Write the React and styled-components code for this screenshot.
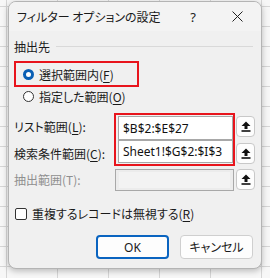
import React from "react";
import styled, { createGlobalStyle } from "styled-components";

const Global = createGlobalStyle`
  html, body { margin: 0; padding: 0; }
  body {
    width: 270px;
    height: 278px;
    overflow: hidden;
    background-color: #f7f7f7;
    background-image:
      repeating-linear-gradient(90deg, transparent 0 6px, #d6d6d6 6px 7px, transparent 7px 51px),
      repeating-linear-gradient(180deg, transparent 0 6px, #d6d6d6 6px 7px, transparent 7px 20px);
    font-family: "Noto Sans", "Noto Sans CJK JP", sans-serif;
  }
`;

const Dialog = styled.div`
  margin: 1px 0 0 8px;
  width: 254px;
  height: 268px;
  box-sizing: border-box;
  background: #f0f0f0;
  border: 1px solid #b4b4b4;
  border-radius: 8px;
  box-shadow: 0 2px 6px rgba(0, 0, 0, 0.25);
  display: flex;
  flex-direction: column;
  overflow: hidden;
  font-size: 12px;
  color: #1a1a1a;
  font-feature-settings: "palt" 1;
`;

const TitleBar = styled.div`
  height: 29px;
  display: flex;
  align-items: center;
  padding: 0 2px 0 8px;
  background: #f3f3f3;
`;

const Title = styled.span`
  flex: 1;
  font-size: 12px;
  font-family: "Noto Sans CJK JP", sans-serif;
`;

const TitleBtn = styled.span`
  width: 44px;
  display: flex;
  justify-content: center;
  font-size: 13px;
  color: #222;
`;

const Body = styled.div`
  padding: 7px 8px 0 5px;
  display: flex;
  flex-direction: column;
`;

const GroupHead = styled.div`
  display: flex;
  align-items: center;
  gap: 6px;
  height: 16px;
  font-family: "Noto Sans CJK JP", sans-serif;
  &::after {
    content: "";
    flex: 1;
    height: 1px;
    background: #d9d9d9;
  }
`;

const Mark = styled.div`
  border: 2px solid ${(p) => (p.$on ? "#e8141c" : "transparent")};
`;

const RadioBox = styled(Mark)`
  align-self: flex-start;
  width: 114px;
  margin-top: 7px;
  padding: 3px 0 3px 7px;
`;

const RadioRow = styled.label`
  display: flex;
  align-items: center;
  gap: 5px;
  height: 16px;
  padding-left: ${(p) => p.$pad || 0}px;
  margin-top: ${(p) => p.$top || 0}px;
  font-family: "Noto Sans CJK JP", sans-serif;
  white-space: nowrap;
`;

const Radio = styled.span`
  width: 11px;
  height: 11px;
  border-radius: 50%;
  box-sizing: border-box;
  border: ${(p) => (p.$checked ? "3.5px solid #0a5fb4" : "1px solid #333")};
  background: #fff;
`;

const U = styled.span`
  text-decoration: underline;
  text-underline-offset: 2px;
`;

const Fields = styled.div`
  margin-top: 9px;
  display: grid;
  grid-template-columns: 101px 119px 21px;
  grid-template-rows: 27px 26px 27px;
  align-items: center;
`;

const FieldLabel = styled.div`
  grid-column: 1;
  font-family: "Noto Sans CJK JP", sans-serif;
  color: ${(p) => (p.$disabled ? "#8f8f8f" : "#1a1a1a")};
  white-space: nowrap;
`;

const InputStack = styled(Mark)`
  grid-column: 2;
  grid-row: 1 / span 2;
  align-self: stretch;
  display: flex;
  flex-direction: column;
  justify-content: space-between;
  padding: 0 0 0 2px;
  margin: 0 -1px 0 -1px;
`;

const Field = styled.div`
  grid-column: 2;
  height: 22px;
  box-sizing: border-box;
  border: 1px solid #a8a8a8;
  background: ${(p) => (p.$disabled ? "#ececec" : "#fff")};
  padding: ${(p) => (p.$disabled ? "2px 3px" : "0 4px")};
  display: flex;
  align-items: center;
  font-family: "Noto Sans", sans-serif;
  font-size: 12px;
  color: #111;
  white-space: nowrap;
  overflow: hidden;
  &::before {
    content: "";
    display: ${(p) => (p.$disabled ? "block" : "none")};
    width: 100%;
    height: 100%;
    background: #f3f3f3;
  }
`;

const StackField = styled(Field)`
  height: 24px;
  margin-top: 1px;
  &:last-child { height: 23px; margin: 0 0 1px; }
`;

const PickBtn = styled.div`
  grid-column: 3;
  justify-self: end;
  width: 19px;
  height: 21px;
  box-sizing: border-box;
  border: 1px solid #c8c8c8;
  border-radius: 4px;
  background: #fdfdfd;
  display: flex;
  align-items: center;
  justify-content: center;
`;

const CheckRow = styled.label`
  margin-top: 12px;
  padding-left: 1px;
  display: flex;
  align-items: center;
  gap: 5px;
  font-family: "Noto Sans CJK JP", sans-serif;
  white-space: nowrap;
`;

const Check = styled.span`
  width: 12px;
  height: 12px;
  box-sizing: border-box;
  border: 1px solid #333;
  border-radius: 2px;
  background: #fff;
`;

const Buttons = styled.div`
  margin-top: 13px;
  display: flex;
  justify-content: flex-end;
  gap: 11px;
`;

const Btn = styled.button`
  width: 73px;
  height: 24px;
  box-sizing: border-box;
  border-radius: 4px;
  border: ${(p) => (p.$primary ? "2px solid #0a64c0" : "1px solid #cfcfcf")};
  background: #fdfdfd;
  font-family: "Noto Sans", "Noto Sans CJK JP", sans-serif;
  font-size: 12px;
  color: #1a1a1a;
  padding: 0;
  font-feature-settings: "palt" 1;
`;

function UpArrow() {
  return (
    <svg width="10" height="11" viewBox="0 0 10 11">
      <path d="M5 0.5 L9.5 5 H6.5 V8 H3.5 V5 H0.5 Z" fill="#111" />
      <rect x="0.5" y="9.2" width="9" height="1.6" fill="#111" />
    </svg>
  );
}

function CloseIcon() {
  return (
    <svg width="11" height="11" viewBox="0 0 11 11">
      <path d="M0.5 0.5 L10.5 10.5 M10.5 0.5 L0.5 10.5" stroke="#222" strokeWidth="1" />
    </svg>
  );
}

export default function App() {
  return (
    <>
      <Global />
      <Dialog>
        <TitleBar>
          <Title>フィルター オプションの設定</Title>
          <TitleBtn>?</TitleBtn>
          <TitleBtn><CloseIcon /></TitleBtn>
        </TitleBar>
        <Body>
          <GroupHead>抽出先</GroupHead>
          <RadioBox $on>
            <RadioRow>
              <Radio $checked />
              <span>選択範囲内(<U>F</U>)</span>
            </RadioRow>
          </RadioBox>
          <RadioRow $pad={9} $top={1}>
            <Radio />
            <span>指定した範囲(<U>O</U>)</span>
          </RadioRow>

          <Fields>
            <FieldLabel style={{ gridRow: 1 }}>リスト範囲(<U>L</U>):</FieldLabel>
            <FieldLabel style={{ gridRow: 2 }}>検索条件範囲(<U>C</U>):</FieldLabel>
            <InputStack $on>
              <StackField>$B$2:$E$27</StackField>
              <StackField>Sheet1!$G$2:$I$3</StackField>
            </InputStack>
            <PickBtn style={{ gridRow: 1 }}><UpArrow /></PickBtn>
            <PickBtn style={{ gridRow: 2 }}><UpArrow /></PickBtn>

            <FieldLabel $disabled style={{ gridRow: 3 }}>抽出範囲(T):</FieldLabel>
            <Field $disabled style={{ gridRow: 3 }} />
            <PickBtn style={{ gridRow: 3 }}><UpArrow /></PickBtn>
          </Fields>

          <CheckRow>
            <Check />
            <span>重複するレコードは無視する(<U>R</U>)</span>
          </CheckRow>

          <Buttons>
            <Btn $primary>OK</Btn>
            <Btn>キャンセル</Btn>
          </Buttons>
        </Body>
      </Dialog>
    </>
  );
}
